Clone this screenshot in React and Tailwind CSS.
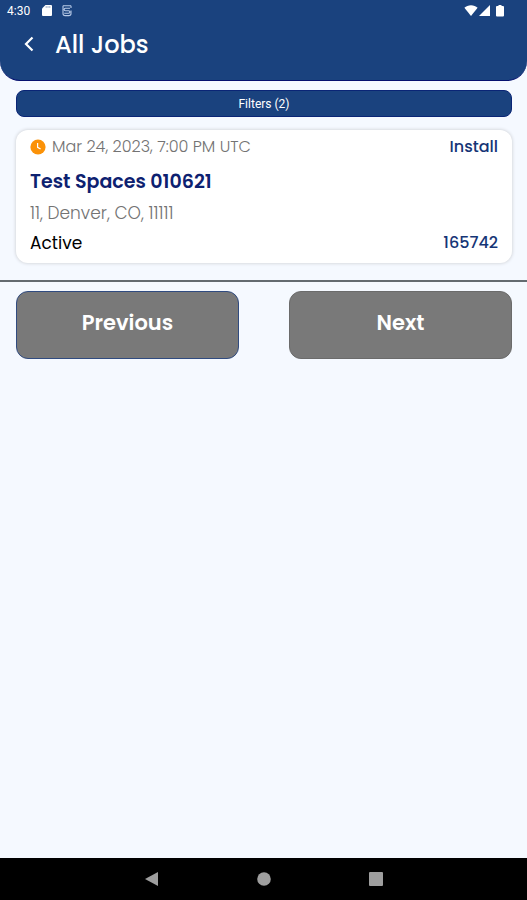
import React from 'react';

const jobs = [
  {
    id: '165742',
    date: 'Mar 24, 2023, 7:00 PM UTC',
    name: 'Test Spaces 010621',
    address: '11, Denver, CO, 11111',
    status: 'Active',
    type: 'Install',
  },
];

const StatusBar = () => (
  <div className="flex h-6 items-start justify-between pt-[3px] pl-[7px] pr-[22px] font-['Roboto',sans-serif] text-xs leading-4 text-white">
    <div className="flex items-center">
      <span>4:30</span>
      <svg className="ml-3 h-3 w-2.5" viewBox="0 0 10 12" fill="currentColor" aria-hidden="true">
        <path d="M3.5 0H9a1 1 0 0 1 1 1v9a1 1 0 0 1-1 1H1a1 1 0 0 1-1-1V3.5z" />
        <path d="M4.2 1.2v1.6M6 1.2v1.6M7.8 1.2v1.6" stroke="#1a427e" strokeWidth="0.5" />
      </svg>
      <svg className="ml-2.5 h-3 w-2.5" viewBox="0 0 10 12" fill="none" stroke="#b9cbe8" strokeWidth="1.1" aria-hidden="true">
        <path d="M.8 .8h8.4M8 3.2H3.4a1.2 1.2 0 0 0 0 2.5h3.2a1.2 1.2 0 0 1 0 2.5H2.2M1 1v7.4a2.2 2.2 0 0 0 2.2 2.2h3.6A2.2 2.2 0 0 0 9 8.4V5.6M9 1v2" />
      </svg>
    </div>
    <div className="flex h-4 items-center">
      <svg className="h-3 w-3.5" viewBox="0 0 14 12" fill="currentColor" aria-hidden="true">
        <path d="M7 11 .4 2.8C2.2 1 4.4.2 7 .2s4.8.8 6.6 2.6z" />
      </svg>
      <svg className="ml-px h-3 w-3" viewBox="0 0 12 12" fill="currentColor" aria-hidden="true">
        <path d="M0 11 11 0v11z" />
      </svg>
      <svg className="ml-1 h-3 w-2.5" viewBox="0 0 10 12" fill="currentColor" aria-hidden="true">
        <path d="M3.5 0h3v1H8a1 1 0 0 1 1 1v8.5a1 1 0 0 1-1 1H2a1 1 0 0 1-1-1V2a1 1 0 0 1 1-1h1.5z" />
      </svg>
    </div>
  </div>
);

const Header = () => (
  <header className="rounded-b-[20px] border-b border-[#06116f] bg-[#1a427e] pb-5 text-white">
    <StatusBar />
    <div className="flex h-9 items-center pl-[18px]">
      <button type="button" aria-label="Back" className="flex h-8 w-5 items-center justify-center pt-1">
        <svg className="h-4 w-3" viewBox="0 0 12 16" fill="none" stroke="currentColor" strokeWidth="2.2" aria-hidden="true">
          <path d="M10.5 1.5 4 8l6.5 6.5" />
        </svg>
      </button>
      <h1 className="ml-[17px] pt-1.5 text-2xl leading-8 font-medium">All Jobs</h1>
    </div>
  </header>
);

const JobCard = ({ job }) => (
  <article className="mt-[13px] flex justify-between rounded-xl bg-white px-3.5 pt-[5px] pb-2 shadow-[0_0_3px_1px_#d9dce1]">
    <div>
      <p className="flex h-6 items-center text-base font-light text-[#737373]">
        <svg className="mr-1.5 h-4 w-4" viewBox="0 0 16 16" aria-hidden="true">
          <circle cx="8" cy="8" r="7.6" fill="#fb9208" />
          <path d="M7.6 4v4.3l3 1.8" fill="none" stroke="#fff" strokeWidth="1.2" />
        </svg>
        {job.date}
      </p>
      <h2 className="mt-[7px] text-[19px] leading-8 font-semibold text-[#0d2170]">{job.name}</h2>
      <p className="mt-[3px] text-[17px] leading-6 font-light text-[#737373]">{job.address}</p>
      <p className="mt-1.5 text-[17px] leading-6 text-black">{job.status}</p>
    </div>
    <div className="flex flex-col items-end justify-between text-base leading-6 font-medium text-[#153576]">
      <span>{job.type}</span>
      <span>{job.id}</span>
    </div>
  </article>
);

const NavBar = () => (
  <nav className="mt-auto flex h-[42px] items-center justify-center gap-24 bg-black text-[#9e9e9e]">
    <button type="button" aria-label="Back">
      <svg className="h-4 w-4" viewBox="0 0 16 16" fill="currentColor" aria-hidden="true">
        <path d="M14 1v14L1 8z" />
      </svg>
    </button>
    <button type="button" aria-label="Home">
      <svg className="h-4 w-4" viewBox="0 0 16 16" fill="currentColor" aria-hidden="true">
        <circle cx="8" cy="8" r="6.8" />
      </svg>
    </button>
    <button type="button" aria-label="Recent apps">
      <svg className="h-4 w-4" viewBox="0 0 16 16" fill="currentColor" aria-hidden="true">
        <rect x="1" y="1" width="14" height="14" rx="1" />
      </svg>
    </button>
  </nav>
);

const App = () => {
  return (
    <div className="flex min-h-screen flex-col bg-[#f5f9ff] font-['Poppins','Inter',sans-serif]">
      <Header />
      <main>
        <div className="pt-[9px] pr-[15px] pb-[17px] pl-4">
          <button type="button" className="block h-[27px] w-full rounded-lg border border-[#0a2576] bg-[#1a427e] font-['Roboto',sans-serif] text-xs text-white">
            Filters (2)
          </button>
          {jobs.map((job) => (
            <JobCard key={job.id} job={job} />
          ))}
        </div>
        <div className="flex gap-[50px] border-t-2 border-[#646b70] pt-[9px] pr-[15px] pl-4">
          <button type="button" className="h-17 flex-1 rounded-xl border border-[#304b80] bg-[#797979] pb-1 text-[21px] font-semibold text-white">
            Previous
          </button>
          <button type="button" className="h-17 flex-1 rounded-xl border border-[#6b6b6b] bg-[#797979] pb-1 text-[21px] font-semibold text-white">
            Next
          </button>
        </div>
      </main>
      <NavBar />
    </div>
  );
};

export default App;
